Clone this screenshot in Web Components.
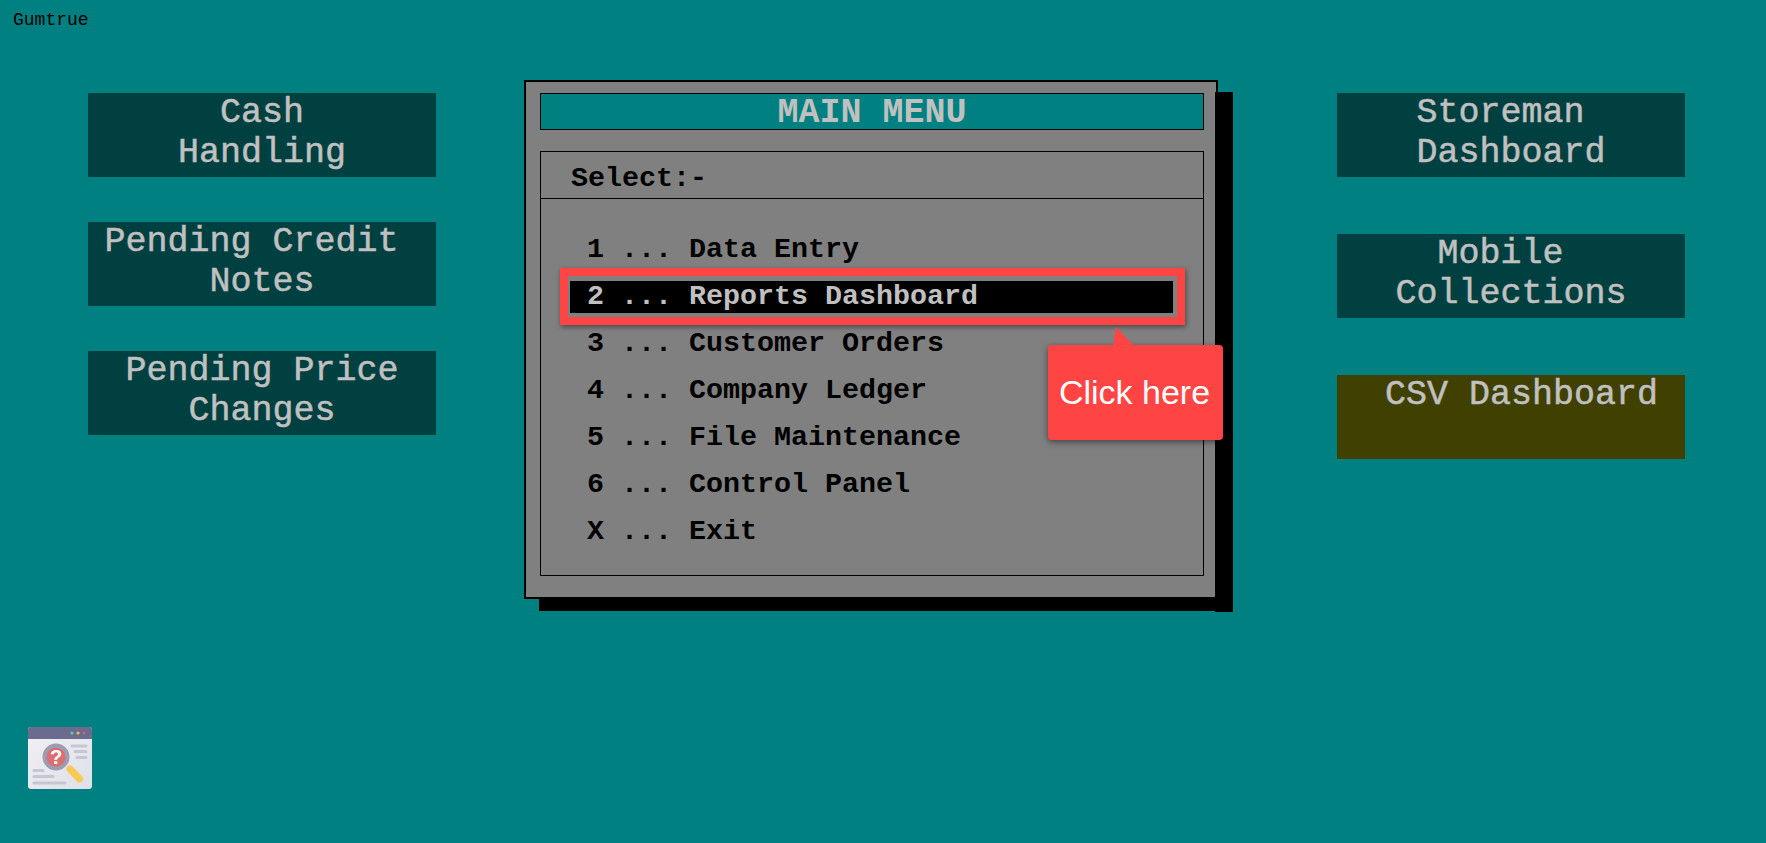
<!DOCTYPE html>
<html lang="en">
<head>
<meta charset="utf-8">
<title>Main Menu</title>
<style>
  html, body { margin: 0; background: #008080; }
</style>
</head>
<body>
<dos-screen>
  <span slot="label">Gumtrue</span>

  <menu-tile slot="left">Cash<br>Handling</menu-tile>
  <menu-tile slot="left">Pending Credit&nbsp;<br>Notes</menu-tile>
  <menu-tile slot="left">Pending Price<br>Changes</menu-tile>

  <menu-window slot="center" heading="MAIN MENU">
    <menu-row key="1">Data Entry</menu-row>
    <menu-row key="2" selected>Reports Dashboard</menu-row>
    <menu-row key="3">Customer Orders</menu-row>
    <menu-row key="4">Company Ledger</menu-row>
    <menu-row key="5">File Maintenance</menu-row>
    <menu-row key="6">Control Panel</menu-row>
    <menu-row key="X">Exit</menu-row>
    <call-out slot="overlay">Click here</call-out>
  </menu-window>

  <menu-tile slot="right">Storeman&nbsp;<br>Dashboard</menu-tile>
  <menu-tile slot="right">Mobile&nbsp;<br>Collections</menu-tile>
  <menu-tile slot="right" tone="olive">&nbsp;CSV Dashboard</menu-tile>

  <help-icon slot="footer"></help-icon>
</dos-screen>

<script>
customElements.define(
  "dos-screen",
  class extends HTMLElement {
    constructor() {
      super().attachShadow({ mode: "open" });
      this.shadowRoot.innerHTML = /*html*/ `
        <div class="label"><slot name="label"></slot></div>
        <div class="columns">
          <div class="tiles left"><slot name="left"></slot></div>
          <div class="center"><slot name="center"></slot></div>
          <div class="tiles right"><slot name="right"></slot></div>
        </div>
        <div class="footer"><slot name="footer"></slot></div>

        <style>
          :host {
            display: block;
            height: 843px;
            overflow: hidden;
            background: #008080;
            font-family: "Liberation Mono", monospace;
          }
          .label {
            height: 40px;
            padding: 10px 0 0 13px;
            box-sizing: border-box;
            font-size: 18px;
            line-height: 20px;
            color: #000;
          }
          .columns {
            display: grid;
            grid-template-columns: 348px 1fr 348px;
            padding: 0 81px 0 88px;
            align-items: start;
          }
          .tiles {
            display: flex;
            flex-direction: column;
            margin-top: 53px;
          }
          .left { gap: 45px; }
          .right { gap: 57px; }
          .center { margin: 40px 0 0 88px; }
          .footer { margin-top: 128px; padding-left: 28px; }
        </style>
      `;
    }
  }
);

customElements.define(
  "menu-tile",
  class extends HTMLElement {
    constructor() {
      super().attachShadow({ mode: "open" });
      this.shadowRoot.innerHTML = /*html*/ `
        <slot></slot>
        <style>
          :host {
            display: block;
            height: 84px;
            background: #004040;
            color: #c0c0c0;
            font-size: 35px;
            line-height: 40px;
            text-align: center;
            white-space: nowrap;
            -webkit-text-stroke: 0.5px #c0c0c0;
          }
          :host([tone="olive"]) { background: #404000; }
        </style>
      `;
    }
  }
);

customElements.define(
  "menu-window",
  class extends HTMLElement {
    constructor() {
      super().attachShadow({ mode: "open" });
      this.shadowRoot.innerHTML = /*html*/ `
        <div class="title"></div>
        <div class="body">
          <div class="prompt">Select:-</div>
          <div class="rows"><slot></slot></div>
        </div>
        <slot name="overlay"></slot>

        <style>
          :host {
            display: block;
            position: relative;
            width: 694px;
            height: 519px;
            box-sizing: border-box;
            padding: 11px 12px 0 14px;
            background: #808080;
            border: 2px solid #000;
          }
          /* the drop shadow is two solid bars, not a blurred one */
          :host::before, :host::after {
            content: "";
            position: absolute;
            background: #000;
          }
          :host::before { left: 689px; top: 10px; width: 18px; height: 520px; }
          :host::after { left: 13px; top: 515px; width: 680px; height: 14px; }
          .title {
            height: 37px;
            box-sizing: border-box;
            border: 1px solid #000;
            background: #008080;
            color: #c0c0c0;
            font-size: 35px;
            font-weight: bold;
            line-height: 38px;
            text-align: center;
          }
          .body {
            margin-top: 21px;
            height: 425px;
            box-sizing: border-box;
            border: 1px solid #000;
          }
          .prompt {
            height: 47px;
            box-sizing: border-box;
            padding: 11px 0 0 30px;
            border-bottom: 1px solid #000;
            color: #000;
            font-size: 28.33px;
            font-weight: bold;
            line-height: 32px;
          }
          .rows {
            display: flex;
            flex-direction: column;
            gap: 15px;
            padding: 35px 30px 0 29px;
          }
        </style>
      `;
      this.shadowRoot.querySelector(".title").textContent =
        this.getAttribute("heading");
    }
  }
);

customElements.define(
  "menu-row",
  class extends HTMLElement {
    constructor() {
      super().attachShadow({ mode: "open" });
      const key = this.getAttribute("key");
      this.shadowRoot.innerHTML = /*html*/ `
        <div class="line">${key} ... <slot></slot></div>
        <style>
          :host {
            display: block;
            position: relative;
            height: 32px;
            padding-left: 17px;
            color: #000;
            font-size: 28.33px;
            font-weight: bold;
            line-height: 32px;
          }
          .line { white-space: pre; }
          :host([selected]) {
            background: #000;
            color: #c0c0c0;
          }
          :host([selected])::after {
            content: "";
            position: absolute;
            inset: -13px -12px -12px -10px;
            border: 8px solid #ff4444;
            box-shadow: 1px 2px 5px rgba(0, 0, 0, 0.45);
          }
        </style>
      `;
    }
  }
);

customElements.define(
  "call-out",
  class extends HTMLElement {
    constructor() {
      super().attachShadow({ mode: "open" });
      this.shadowRoot.innerHTML = /*html*/ `
        <svg class="tip" width="22" height="19" viewBox="0 0 22 19" aria-hidden="true">
          <path d="M3 0 L21 19 H0 Z" fill="#ff4444"/>
        </svg>
        <slot></slot>
        <style>
          :host {
            position: absolute;
            left: 522px;
            top: 263px;
            width: 175px;
            height: 95px;
            box-sizing: border-box;
            padding-right: 2px;
            display: flex;
            align-items: center;
            justify-content: center;
            background: #ff4444;
            border-radius: 4px;
            box-shadow: 0 2px 6px rgba(0, 0, 0, 0.5);
            color: #fff;
            font-family: "Liberation Sans", Arial, sans-serif;
            font-size: 34px;
          }
          .tip {
            position: absolute;
            left: 65px;
            top: -18px;
          }
        </style>
      `;
    }
  }
);

customElements.define(
  "help-icon",
  class extends HTMLElement {
    constructor() {
      super().attachShadow({ mode: "open" });
      this.shadowRoot.innerHTML = /*html*/ `
        <svg width="64" height="62" viewBox="0 0 64 62" aria-hidden="true">
          <defs>
            <linearGradient id="sheet" x1="0" y1="0" x2="1" y2="1">
              <stop offset="0" stop-color="#f0f0f5"/>
              <stop offset="1" stop-color="#dfdfe8"/>
            </linearGradient>
          </defs>
          <rect width="64" height="62" rx="3" fill="url(#sheet)"/>
          <path d="M0 12 V3 a3 3 0 0 1 3 -3 H61 a3 3 0 0 1 3 3 V12 Z" fill="#6b6b90"/>
          <circle cx="44" cy="6" r="1.6" fill="#63c2c2"/>
          <circle cx="50" cy="6" r="1.6" fill="#e8c050"/>
          <circle cx="56" cy="6" r="1.6" fill="#d06060"/>
          <g stroke="#c6c6d2" stroke-width="3" stroke-linecap="round" fill="none">
            <path d="M44 19 H58 M47 24.500 H58 M49 30.500 H58"/>
            <path d="M6 43.500 H15 M6 49.500 H25 M6 56 H37"/>
          </g>
          <path d="M42 42 L51.500 52" stroke="#f7cb52" stroke-width="7" stroke-linecap="round"/>
          <circle cx="28" cy="30" r="11.500" fill="#da6e70" stroke="#9c9cb2" stroke-width="4"/>
          <text x="28" y="37" text-anchor="middle" fill="#fff"
            font-family="Liberation Sans, sans-serif" font-weight="bold" font-size="20">?</text>
        </svg>
        <style>
          :host { display: block; width: 64px; height: 62px; }
          svg { display: block; }
        </style>
      `;
    }
  }
);
</script>
</body>
</html>
